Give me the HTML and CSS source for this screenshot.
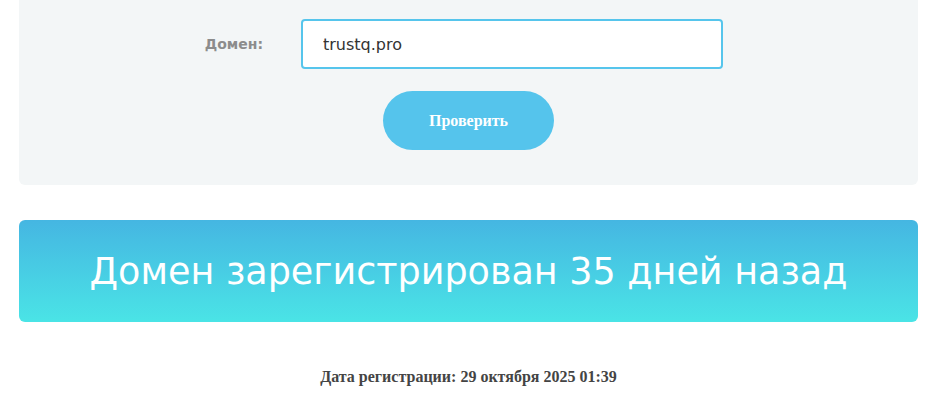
FILE: index.html
```html
<!DOCTYPE html>
<html lang="ru">

<head>
    <meta charset="UTF-8">
    <meta name="viewport" content="width=device-width, initial-scale=1.0">
    <title>Проверка возраста домена</title>
    <link rel="stylesheet" href="styles.css">
</head>

<body>
    <div class="page">
        <form class="check-form" action="/check" method="POST">
            <div class="form-row">
                <label for="domain">Домен:</label>
                <input type="text" name="domain" id="domain" value="trustq.pro">
            </div>
            <button type="submit" class="check-button">Проверить</button>
        </form>

        <div class="result-banner">Домен зарегистрирован 35 дней назад</div>

        <p class="reg-date">Дата регистрации: 29 октября 2025 01:39</p>
    </div>
</body>
</html>
```

FILE: styles.css
```css
body {
    margin: 0;
    padding: 0;
    background-color: #ffffff;
    font-family: "DejaVu Sans", sans-serif;
}

.page {
    width: 899px;
    margin-left: 19px;
}

.check-form {
    background-color: #f3f6f7;
    border-radius: 0 0 6px 6px;
    padding: 19px 0 35px;
    display: flex;
    flex-direction: column;
    align-items: center;
    gap: 22px;
    margin: 0;
}

.form-row {
    display: grid;
    grid-template-columns: 244px 422px;
    column-gap: 38px;
    align-items: center;
    align-self: flex-start;
}

label {
    text-align: right;
    font-size: 14px;
    font-weight: bold;
    color: #8c8c8c;
}

input[type="text"] {
    height: 50px;
    box-sizing: border-box;
    border: 2px solid #56c5ec;
    border-radius: 4px;
    padding: 0 20px;
    font-family: "DejaVu Sans", sans-serif;
    font-size: 16px;
    font-weight: 500;
    color: #333333;
    outline: none;
}

.check-button {
    width: 171px;
    height: 59px;
    border: none;
    border-radius: 30px;
    background-color: #55c4ec;
    color: #ffffff;
    font-family: "Liberation Serif", serif;
    font-size: 16px;
    font-weight: bold;
    cursor: pointer;
}

.result-banner {
    margin-top: 35px;
    height: 102px;
    border-radius: 6px;
    background: linear-gradient(to bottom, #45b6e2, #4ae4e6);
    color: #ffffff;
    font-size: 36.5px;
    display: flex;
    align-items: center;
    justify-content: center;
}

.reg-date {
    margin: 46px 0 0;
    text-align: center;
    font-family: "Liberation Serif", serif;
    font-size: 16px;
    font-weight: bold;
    color: #444444;
}
```
